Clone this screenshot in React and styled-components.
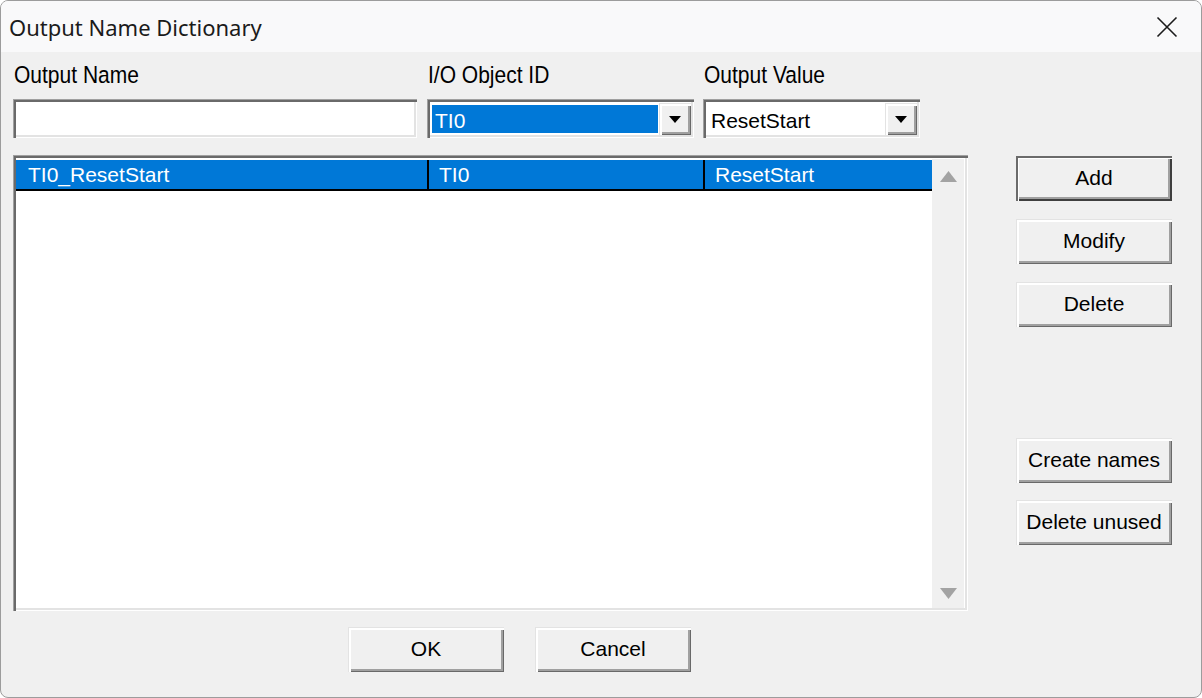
import React from "react";
import styled, { createGlobalStyle } from "styled-components";

const Global = createGlobalStyle`
  html, body { margin: 0; padding: 0; background: #ffffff; }
  body { width: 1202px; height: 698px; overflow: hidden; }
  * { box-sizing: border-box; }
`;

const Window = styled.div`
  width: 1202px;
  height: 698px;
  border: 1px solid #9c9c9c;
  border-radius: 8px;
  overflow: hidden;
  background: #f0f0f0;
  display: flex;
  flex-direction: column;
  font-family: "Liberation Sans", Arial, sans-serif;
  font-size: 21px;
  color: #000;
`;

const TitleBar = styled.div`
  height: 51px;
  flex: none;
  background: #f9f9fa;
  display: flex;
  align-items: center;
  justify-content: space-between;
  padding: 0 0 0 8px;
`;

const Title = styled.div`
  font-family: "Noto Sans", "Open Sans", sans-serif;
  font-size: 22px;
  color: #1b1b1b;
  padding-top: 1px;
`;

const CloseBtn = styled.div`
  width: 46px;
  height: 51px;
  display: flex;
  align-items: center;
  justify-content: center;
  margin-right: 11px;
`;

const Body = styled.div`
  flex: 1;
  display: flex;
  flex-direction: column;
  padding: 0 0 0 12px;
`;

const FieldsRow = styled.div`
  display: flex;
  padding-top: 9px;
`;

const FieldGroup = styled.div`
  width: ${(p) => p.$w}px;
  margin-right: ${(p) => p.$mr || 0}px;
  display: flex;
  flex-direction: column;
`;

const Label = styled.div`
  height: 38px;
  line-height: 30px;
  padding-left: 1px;
  transform: scaleY(1.12);
  transform-origin: left center;
`;

const sunken = `
  box-shadow:
    inset 1px 1px 0 #a0a0a0,
    inset 3px 3px 0 #6a6a6a,
    inset -1px -1px 0 #ffffff,
    inset -3px -3px 0 #e3e3e3;
`;

const TextBox = styled.div`
  height: 39px;
  background: #fff;
  ${sunken}
`;

const Combo = styled.div`
  height: 39px;
  background: #fff;
  ${sunken}
  display: flex;
  align-items: stretch;
  padding: 4px 3px 3px 4px;
`;

const ComboText = styled.div`
  flex: 1;
  margin: 2px 1px 2px 1px;
  padding: 3px 0 0 3px;
  display: flex;
  align-items: center;
  background: ${(p) => (p.$sel ? "#0078d7" : "transparent")};
  color: ${(p) => (p.$sel ? "#fff" : "#000")};
`;

const raised = `
  box-shadow:
    inset 1px 1px 0 #e3e3e3,
    inset 3px 3px 0 #ffffff,
    inset -1px -1px 0 #696969,
    inset -3px -3px 0 #a0a0a0;
`;

const DropBtn = styled.div`
  width: 32px;
  background: #f0f0f0;
  ${raised}
  display: flex;
  align-items: center;
  justify-content: center;
`;

const Main = styled.div`
  display: flex;
  margin-top: 17px;
`;

const ListView = styled.div`
  width: 955px;
  height: 456px;
  background: #fff;
  ${sunken}
  padding: 4px 3px 3px 3px;
  display: flex;
`;

const ListContent = styled.div`
  flex: 1;
  display: flex;
  flex-direction: column;
`;

const Row = styled.div`
  display: flex;
  height: 31px;
  background: #0078d7;
  color: #fff;
  border-bottom: 2px solid #000;
  margin-top: 1px;
`;

const Cell = styled.div`
  width: ${(p) => p.$w}px;
  flex: ${(p) => (p.$w ? "none" : "1")};
  padding-left: ${(p) => p.$pl}px;
  display: flex;
  align-items: center;
  border-right: ${(p) => (p.$sep ? "2px solid #000" : "none")};
`;

const ScrollBar = styled.div`
  width: 33px;
  background: #f0f0f0;
  border-right: 1px solid #fff;
  display: flex;
  flex-direction: column;
  justify-content: space-between;
  align-items: center;
  padding: 12px 0 9px 0;
`;

const SideCol = styled.div`
  margin-left: 48px;
  display: flex;
  flex-direction: column;
`;

const Button = styled.div`
  width: 156px;
  height: 45px;
  background: #f0f0f0;
  display: flex;
  align-items: center;
  justify-content: center;
  padding-bottom: 2px;
  margin-top: ${(p) => p.$mt || 0}px;
  ${(p) =>
    p.$default
      ? `box-shadow:
          inset 2px 2px 0 #6b6b6b,
          inset 3px 3px 0 #ffffff,
          inset -2px -2px 0 #3f3f3f,
          inset -4px -4px 0 #a0a0a0;`
      : raised}
`;

const BottomRow = styled.div`
  display: flex;
  gap: 31px;
  margin-top: 16px;
  padding-left: 335px;
`;

const Arrow = ({ up, color = "#000", w = 12, h = 7 }) => (
  <svg width={w} height={h} viewBox={`0 0 ${w} ${h}`}>
    {up ? (
      <polygon points={`0,${h} ${w / 2},0 ${w},${h}`} fill={color} />
    ) : (
      <polygon points={`0,0 ${w},0 ${w / 2},${h}`} fill={color} />
    )}
  </svg>
);

export default function App() {
  return (
    <>
      <Global />
      <Window>
        <TitleBar>
          <Title>Output Name Dictionary</Title>
          <CloseBtn>
            <svg width="22" height="22" viewBox="0 0 22 22">
              <path d="M1.5 1.5 L20.5 20.5 M20.5 1.5 L1.5 20.5" stroke="#1b1b1b" strokeWidth="1.6" fill="none" />
            </svg>
          </CloseBtn>
        </TitleBar>
        <Body>
          <FieldsRow>
            <FieldGroup $w={404} $mr={10}>
              <Label>Output Name</Label>
              <TextBox />
            </FieldGroup>
            <FieldGroup $w={267} $mr={9}>
              <Label>I/O Object ID</Label>
              <Combo>
                <ComboText $sel>TI0</ComboText>
                <DropBtn>
                  <Arrow />
                </DropBtn>
              </Combo>
            </FieldGroup>
            <FieldGroup $w={217}>
              <Label>Output Value</Label>
              <Combo>
                <ComboText>ResetStart</ComboText>
                <DropBtn>
                  <Arrow />
                </DropBtn>
              </Combo>
            </FieldGroup>
          </FieldsRow>
          <Main>
            <ListView>
              <ListContent>
                <Row>
                  <Cell $w={413} $pl={12} $sep>TI0_ResetStart</Cell>
                  <Cell $w={276} $pl={10} $sep>TI0</Cell>
                  <Cell $pl={10}>ResetStart</Cell>
                </Row>
              </ListContent>
              <ScrollBar>
                <Arrow up color="#a3a3a3" w={17} h={11} />
                <Arrow color="#a3a3a3" w={17} h={11} />
              </ScrollBar>
            </ListView>
            <SideCol>
              <Button $default $mt={1}>Add</Button>
              <Button $mt={18}>Modify</Button>
              <Button $mt={18}>Delete</Button>
              <Button $mt={111}>Create names</Button>
              <Button $mt={17}>Delete unused</Button>
            </SideCol>
          </Main>
          <BottomRow>
            <Button>OK</Button>
            <Button>Cancel</Button>
          </BottomRow>
        </Body>
      </Window>
    </>
  );
}
